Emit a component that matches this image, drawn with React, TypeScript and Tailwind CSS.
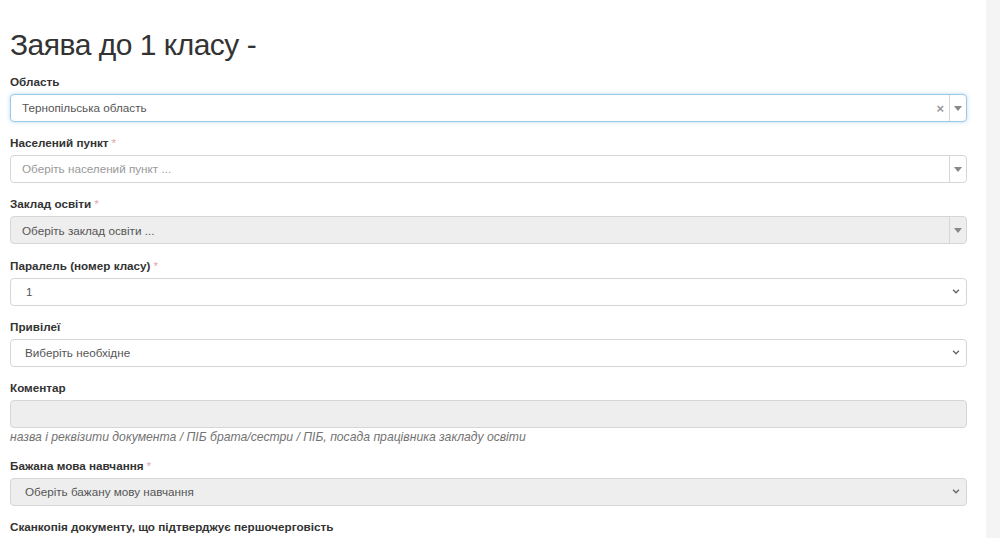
import React from 'react';

const Caret = () => (
    <svg width="8" height="5" viewBox="0 0 8 5" className="text-[#888]">
        <path d="M0 0h8L4 5z" fill="currentColor" />
    </svg>
);

const Chevron = () => (
    <svg width="8" height="5" viewBox="0 0 9 6" fill="none" className="text-[#666]">
        <path d="M1 1l3.5 3.5L8 1" stroke="currentColor" strokeWidth="1.6" />
    </svg>
);

const Label = ({ text, required }: { text: string; required?: boolean }) => (
    <div className="text-[11.7px] leading-[16px] font-bold text-[#333] mb-[4px]">
        {text}
        {required && <span className="text-[#e7a3a3] font-normal ml-[3px]">*</span>}
    </div>
);

interface BoxProps {
    text: string;
    placeholder?: boolean;
    disabled?: boolean;
    focus?: boolean;
    clear?: boolean;
    kind: 'select2' | 'native' | 'input';
    pad?: string;
}

const Box = ({ text, placeholder, disabled, focus, clear, kind, pad = 'pl-[11px]' }: BoxProps) => {
    const border = focus ? 'border-[#9fc7e6] shadow-[0_0_4px_rgba(102,175,233,0.45)]' : 'border-[#d6d6d6]';
    const bg = disabled ? 'bg-[#eeeeee]' : 'bg-white';
    const color = placeholder ? 'text-[#999]' : 'text-[#555]';
    return (
        <div className={`h-[28px] flex items-center rounded-[4px] border ${border} ${bg}`}>
            <div className={`flex-1 ${pad} text-[11.7px] ${color} truncate`}>{text}</div>
            {kind === 'select2' && (
                <>
                    {clear && <span className="text-[#999] text-[13px] leading-none mr-[5px] font-bold">×</span>}
                    <div className="w-[17px] h-full flex items-center justify-center border-l border-[#d6d6d6]">
                        <Caret />
                    </div>
                </>
            )}
            {kind === 'native' && (
                <div className="w-[20px] flex items-center justify-center">
                    <Chevron />
                </div>
            )}
        </div>
    );
};

export default function App() {
    return (
        <div className="min-h-[538px] flex bg-white font-['Liberation_Sans',Arial,sans-serif]">
            <div className="flex-1 pl-[10px] pr-[19px]">
                <h1 className="text-[30px] leading-[34px] tracking-[-0.5px] text-[#333] pt-[28px] mb-[12px]">Заява до 1 класу -</h1>

                <div className="mb-[13.2px]">
                    <Label text="Область" />
                    <Box kind="select2" text="Тернопільська область" focus clear />
                </div>
                <div className="mb-[13.2px]">
                    <Label text="Населений пункт" required />
                    <Box kind="select2" text="Оберіть населений пункт ..." placeholder />
                </div>
                <div className="mb-[13.2px]">
                    <Label text="Заклад освіти" required />
                    <Box kind="select2" text="Оберіть заклад освіти ..." disabled />
                </div>
                <div className="mb-[13.2px]">
                    <Label text="Паралель (номер класу)" required />
                    <Box kind="native" text="1" pad="pl-[15px]" />
                </div>
                <div className="mb-[13.2px]">
                    <Label text="Привілеї" />
                    <Box kind="native" text="Виберіть необхідне" pad="pl-[14px]" />
                </div>
                <div className="mb-[13px]">
                    <Label text="Коментар" />
                    <Box kind="input" text="" disabled />
                    <div className="mt-[2px] text-[12.2px] leading-[15px] italic text-[#737373]">
                        назва і реквізити документа / ПІБ брата/сестри / ПІБ, посада працівника закладу освіти
                    </div>
                </div>
                <div className="mb-[13px]">
                    <Label text="Бажана мова навчання" required />
                    <Box kind="native" text="Оберіть бажану мову навчання" disabled pad="pl-[14px]" />
                </div>
                <Label text="Сканкопія документу, що підтверджує першочерговість" />
            </div>
            <div className="w-[14px] bg-[#f4f4f4]" />
        </div>
    );
}
